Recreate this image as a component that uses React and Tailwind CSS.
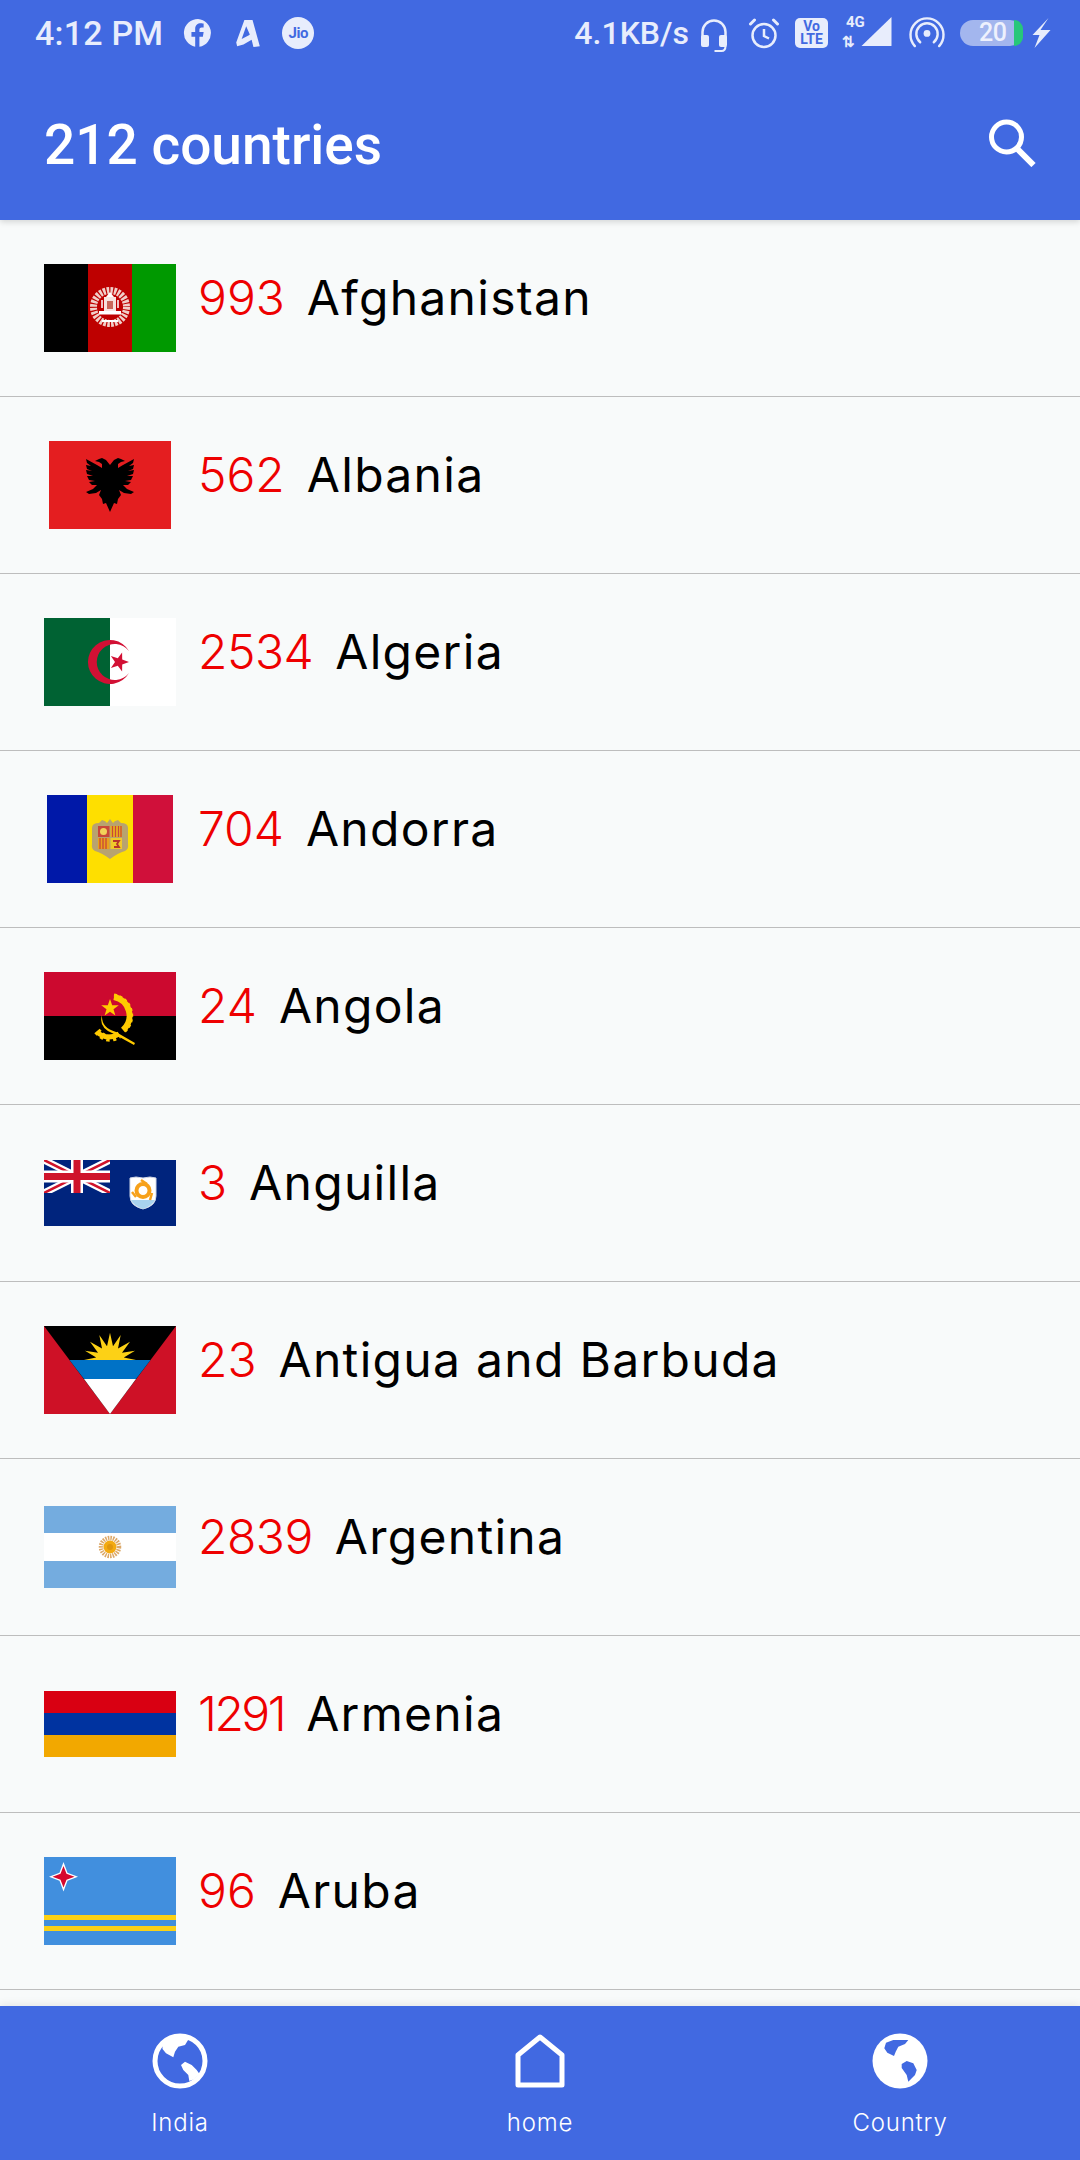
import React from "react";

function Flag({ children, w = 132, h = 88 }) {
  return (
    <svg width={w} height={h} viewBox={`0 0 ${w} ${h}`} className="block">
      {children}
    </svg>
  );
}

const Afghanistan = () => (
  <Flag>
    <rect width="44" height="88" fill="#000" />
    <rect x="44" width="44" height="88" fill="#be0000" />
    <rect x="88" width="44" height="88" fill="#009900" />
    <circle cx="66" cy="43" r="16.500" fill="none" stroke="#f0cfc9" strokeWidth="7" strokeDasharray="2.500 1.200" />
    <rect x="60" y="33" width="12" height="14" fill="#f6e3df" />
    <rect x="63" y="37" width="6" height="8" fill="#c96a5c" />
    <rect x="55" y="47" width="22" height="3.500" fill="#fff" />
    <path d="M58 36v8M74 36v8" stroke="#fff" strokeWidth="1.500" />
    <path d="M62 33l4-5 4 5z" fill="#fff" />
    <path d="M58 57h16" stroke="#fff" strokeWidth="2" />
  </Flag>
);
const eagle =
  "M61 24L57 19L53 17L50 18L46 20L50 21L53 23L53 27L48 24L37 18L38 22L42 25L37 24L38 28L43 30L37 29L38 33L44 35L38 35L40 39L46 40L40 41L43 44L48 44L44 48L37 51L40 53L47 52L52 49L50 54L53 58L54 63L57 62L61 71Z";
const Albania = () => (
  <Flag w={122} h={88}>
    <rect width="122" height="88" fill="#e41e20" />
    <path d={eagle} fill="#000" />
    <path d={eagle} fill="#000" transform="translate(122 0) scale(-1 1)" />
  </Flag>
);
const Algeria = () => (
  <Flag>
    <rect width="66" height="88" fill="#006233" />
    <rect x="66" width="66" height="88" fill="#fff" />
    <path d="M85 33A22 22 0 1 0 85 55A18 18 0 1 1 85 33z" fill="#d21034" />
    <path d="M85 44L78.200 46.400L78.100 53.500L73.800 47.800L66.900 49.900L71 44L66.900 38.100L73.800 40.200L78.100 34.500L78.200 41.600z" fill="#d21034" />
  </Flag>
);
const Andorra = () => (
  <Flag w={126} h={88}>
    <rect width="40" height="88" fill="#0018a8" />
    <rect x="40" width="46" height="88" fill="#fedf00" />
    <rect x="86" width="40" height="88" fill="#d0103a" />
    <path d="M45 33q0-5 7-5l3-3q4 1 5 3l3-4 3 4q1-2 5-3l3 3q7 0 7 5v16q1 5-3 7-7 2-15 8-8-6-15-8-4-2-3-7z" fill="#b8a36f" />
    <rect x="51" y="31" width="11.500" height="11" fill="#c8473a" />
    <circle cx="56.500" cy="36.500" r="3.500" fill="#f2d35a" />
    <rect x="63.500" y="31" width="11.500" height="11" fill="#e9b41c" />
    <path d="M65.500 31v11M68.500 31v11M71.500 31v11M74 31v11" stroke="#c8473a" strokeWidth="1.300" />
    <rect x="51" y="43" width="11.500" height="11" fill="#e9a21c" />
    <path d="M53 43v11M56 43v11M59 43v11" stroke="#c8473a" strokeWidth="1.300" />
    <rect x="63.500" y="43" width="11.500" height="11" fill="#f0c92a" />
    <path d="M66 46h6l-2 3 2 3h-5" fill="none" stroke="#b8352a" strokeWidth="1.800" />
  </Flag>
);
const Angola = () => (
  <Flag>
    <rect width="132" height="44" fill="#cc092f" />
    <rect y="44" width="132" height="44" fill="#000" />
    <path d="M70 25A19 19 0 0 1 79 58" fill="none" stroke="#ffcb00" strokeWidth="6" />
    <path d="M70 23A21 21 0 0 1 80 60" fill="none" stroke="#ffcb00" strokeWidth="3" strokeDasharray="3 2.500" />
    <path d="M53 60Q63 69 75 62" fill="none" stroke="#ffcb00" strokeWidth="5" />
    <path d="M53 59Q63 71 75 63" fill="none" stroke="#ffcb00" strokeWidth="7" strokeDasharray="3 3" />
    <path d="M58 43Q57 56 72 60L91 71L90 73L70 62Q54 56 58 43z" fill="#ffcb00" />
    <path d="M66 27L68.200 33.200L74.800 33.300L69.500 37.300L71.400 43.500L66 39.800L60.600 43.500L62.500 37.300L57.200 33.300L63.800 33.200z" fill="#ffcb00" />
  </Flag>
);
const Anguilla = () => (
  <Flag w={132} h={66}>
    <rect width="132" height="66" fill="#00247d" />
    <svg width="66" height="33" viewBox="0 0 66 33">
      <path d="M0 0L66 33M66 0L0 33" stroke="#fff" strokeWidth="7" />
      <path d="M0 0L66 33M66 0L0 33" stroke="#cf142b" strokeWidth="2.500" />
      <path d="M33 0V33M0 16.500H66" stroke="#fff" strokeWidth="12" />
      <path d="M33 0V33M0 16.500H66" stroke="#cf142b" strokeWidth="7" />
    </svg>
    <path d="M86 18l6-1 7 1 7-1 6 1v18q0 10-13 13q-13-3-13-13z" fill="#fff" stroke="#cfd6e6" strokeWidth="1" />
    <path d="M87 40h24q-3 6-12 9q-9-3-12-9z" fill="#a9d3ee" />
    <circle cx="99" cy="30.500" r="6.500" fill="none" stroke="#f7a11a" strokeWidth="4" />
    <path d="M97 20l6 4M108 33l-2 7M92 37l-4-5" stroke="#f7a11a" strokeWidth="2.500" />
  </Flag>
);
const Antigua = () => (
  <Flag>
    <rect width="132" height="88" fill="#ce1126" />
    <path d="M0 0H132L66 88z" fill="#000" />
    <path d="M25.500 34H106.500L92 53H40z" fill="#0072c6" />
    <path d="M40 53H92L66 88z" fill="#fff" />
    <path
      d="M40 34L52.200 31.600L41 24.700L54 26.800L46 15.700L58 22.500L55.300 9L63 20.300L66 6.700L69 20.300L76.700 9L74 22.500L86 15.700L78 26.800L91 24.700L79.800 31.600L92 34z"
      fill="#fcd116"
    />
  </Flag>
);
const Argentina = () => (
  <Flag w={132} h={82}>
    <rect width="132" height="82" fill="#74acdf" />
    <rect y="27" width="132" height="28" fill="#fff" />
    <circle cx="66" cy="41" r="9" fill="none" stroke="#dca868" strokeWidth="4.500" strokeDasharray="1.500 1" />
    <circle cx="66" cy="41" r="6.500" fill="#f3aa12" />
    <circle cx="66" cy="41" r="3" fill="#e0960e" />
  </Flag>
);
const Armenia = () => (
  <Flag w={132} h={66}>
    <rect width="132" height="22" fill="#d90012" />
    <rect y="22" width="132" height="22" fill="#0033a0" />
    <rect y="44" width="132" height="22" fill="#f2a800" />
  </Flag>
);
const Aruba = () => (
  <Flag>
    <rect width="132" height="88" fill="#418fde" />
    <rect y="58" width="132" height="5" fill="#fbd116" />
    <rect y="69" width="132" height="5" fill="#fbd116" />
    <path d="M19.500 5L23.500 15.700 34 19.700 23.500 23.700 19.500 34.500 15.500 23.700 5 19.700 15.500 15.700z" fill="#fff" />
    <path d="M19.500 9L22.500 16.700 30.500 19.700 22.500 22.700 19.500 30.500 16.500 22.700 8.500 19.700 16.500 16.700z" fill="#d6082e" />
  </Flag>
);

const rows = [
  ["993", "Afghanistan", Afghanistan, ""],
  ["562", "Albania", Albania, ""],
  ["2534", "Algeria", Algeria, "tracking-[-0.5px]"],
  ["704", "Andorra", Andorra, ""],
  ["24", "Angola", Angola, ""],
  ["3", "Anguilla", Anguilla, ""],
  ["23", "Antigua and Barbuda", Antigua, ""],
  ["2839", "Argentina", Argentina, "tracking-[-0.5px]"],
  ["1291", "Armenia", Armenia, "tracking-[-2.5px]"],
  ["96", "Aruba", Aruba, ""],
];

const Fb = () => (
  <svg width="30" height="30" viewBox="0 0 32 32" className="block">
    <path d="M16 1a15 15 0 0 0-3 29.700V20h-4v-5h4v-3.500C13 7.500 15.500 5.500 19 5.500c1.500 0 3 .3 3 .3V10h-2c-2 0-2.500 1.200-2.500 2.500V15H22l-.8 5h-3.700v10.700A15 15 0 0 0 16 1z" fill="#e8edfc" />
  </svg>
);
const ABrand = () => (
  <svg width="26" height="29" viewBox="0 0 28 32" className="block">
    <path d="M10 1h9l8 29-7 1-2-8-9 5-7 2-1-4zM12 8l-5 14 8-4 1-1z" fill="#e8edfc" fillRule="evenodd" />
  </svg>
);
const Jio = () => (
  <div className="w-8 h-8 rounded-full bg-[#e8edfc] flex items-center justify-center text-[#4169e1] text-[15px] font-bold tracking-[-0.5px] font-['Roboto',sans-serif]">
    Jio
  </div>
);
const Headset = () => (
  <svg width="28" height="34" viewBox="0 0 28 34" className="block mt-[5px]">
    <path d="M2.500 19V13a11.500 11.500 0 0 1 23 0v6" fill="none" stroke="#e8edfc" strokeWidth="2.500" />
    <rect x="1" y="16" width="8" height="12" rx="2" fill="#e8edfc" />
    <rect x="19" y="16" width="8" height="12" rx="2" fill="#e8edfc" />
    <path d="M25.500 27q0 5-4 5h-7" fill="none" stroke="#e8edfc" strokeWidth="2" />
  </svg>
);
const Alarm = () => (
  <svg width="32" height="31" viewBox="0 0 32 31" className="block">
    <circle cx="16" cy="17.500" r="11.500" fill="none" stroke="#e8edfc" strokeWidth="2.500" />
    <path d="M16 11v7l5 2.500" fill="none" stroke="#e8edfc" strokeWidth="2.500" />
    <path d="M2.500 6l4-4M29.500 6l-4-4" stroke="#e8edfc" strokeWidth="3" strokeLinecap="round" />
  </svg>
);
const Signal = () => (
  <svg width="31" height="30" viewBox="0 0 31 30" className="block">
    <path d="M30.500 1v28.500a.5.5 0 0 1-.5.5H.5z" fill="#e8edfc" />
  </svg>
);
const Hotspot = () => (
  <svg width="36" height="33" viewBox="0 0 36 34" className="block">
    <circle cx="18" cy="18" r="3.500" fill="#e8edfc" />
    <path d="M11 27a11 11 0 1 1 14 0" fill="none" stroke="#e8edfc" strokeWidth="2.500" strokeLinecap="round" />
    <path d="M5.500 31a17 17 0 1 1 25 0" fill="none" stroke="#e8edfc" strokeWidth="2.500" strokeLinecap="round" />
  </svg>
);
const Bolt = () => (
  <svg width="19" height="30" viewBox="0 0 18 30" className="block">
    <path d="M16 0L8 12h10L2 30l5-13H0z" fill="#e8edfc" />
  </svg>
);

function Globe({ full }) {
  if (full) {
    return (
      <svg width="56" height="56" viewBox="0 0 56 56" className="block">
        <circle cx="28" cy="28" r="27.500" fill="#fff" />
        <path d="M14 9.700L21.300 7L36.300 7L33 11L26.300 13.700L23.700 18.700L22 23L15.300 19.700L12.300 15.300z" fill="#4169e1" />
        <path d="M29.700 31L34.700 28L41.300 30.300L44.700 37L43 42L36.300 48.700L34.700 42L29.700 35z" fill="#4169e1" />
      </svg>
    );
  }
  return (
    <svg width="56" height="56" viewBox="0 0 56 56" className="block">
      <circle cx="28" cy="28" r="25" fill="none" stroke="#fff" strokeWidth="5" />
      <path d="M37.300 5L33 12L26.300 13.700L23 18.700L21.300 24.300L14 20.300L10.500 16L10.500 11Q20 1 37.300 5Z" fill="#fff" />
      <path d="M29 32L33 28.700L39.700 32L44.700 37L47.500 41L42.300 46.300L37.300 48L36.300 42L31.300 37Z" fill="#fff" />
    </svg>
  );
}

function NavItem({ icon, label }) {
  return (
    <div className="flex-1 flex flex-col items-center pt-[27px]">
      <div className="h-[56px] flex items-center justify-center">{icon}</div>
      <div className="mt-[18px] text-[24px] leading-[32px] tracking-[0.8px] text-white font-light font-['Inter',sans-serif]">
        {label}
      </div>
    </div>
  );
}

export default function App() {
  return (
    <div className="relative w-[1080px] h-[2160px] overflow-hidden flex flex-col bg-[#f8fafa]">
      <header className="h-[220px] shrink-0 bg-[#4169e1] shadow-[0_2px_6px_rgba(0,0,0,0.15)] relative z-10 flex flex-col">
        <div className="h-[66px] flex items-center justify-between pl-[35px] pr-[29px] text-[#e8edfc] font-['Roboto',sans-serif] font-medium">
          <div className="flex items-center">
            <span className="text-[34px] leading-none tracking-[0.2px]">4:12 PM</span>
            <span className="ml-[20px]"><Fb /></span>
            <span className="ml-[22px]"><ABrand /></span>
            <span className="ml-[21px]"><Jio /></span>
          </div>
          <div className="flex items-center">
            <span className="text-[32px] leading-none">4.1KB/s</span>
            <span className="ml-[11px]"><Headset /></span>
            <span className="ml-[20px]"><Alarm /></span>
            <span className="ml-[15px] w-[33px] h-[30px] rounded-[5px] bg-[#e8edfc] text-[#4169e1] text-[14px] leading-[13px] font-bold text-center flex flex-col justify-center">
              <span>Vo</span>
              <span>LTE</span>
            </span>
            <span className="ml-[14px] w-[19px] h-[32px] relative text-[15px] leading-[14px] font-bold">
              <span className="absolute left-[4px] top-[-2px]">4G</span>
              <span className="absolute left-0 top-[18px] text-[15px]">⇅</span>
            </span>
            <span className="-mt-[4px]"><Signal /></span>
            <span className="ml-[17px] -mt-[2px]"><Hotspot /></span>
            <span className="ml-[15px] w-[63px] h-[26px] rounded-full bg-[#a3b6ee] relative flex items-center">
              <span className="ml-[19px] text-[25px] leading-[26px] text-[#eef1fd] tracking-[-0.5px]">20</span>
              <span className="absolute right-0 top-0 bottom-0 w-[9px] rounded-r-full bg-[#27c77a]" />
            </span>
            <span className="ml-[9px]"><Bolt /></span>
          </div>
        </div>
        <div className="flex-1 flex items-center justify-between pl-[44px] pr-[44px]">
          <h1 className="text-[55px] leading-none font-medium text-white font-['Roboto',sans-serif] mt-[4px]">212 countries</h1>
          <svg width="47" height="48" viewBox="0 0 46 48" className="block">
            <circle cx="17" cy="18" r="15" fill="none" stroke="#fff" strokeWidth="5" />
            <path d="M28 30l16 16" stroke="#fff" strokeWidth="6" />
          </svg>
        </div>
      </header>

      <main className="flex-1 overflow-hidden">
        {rows.map(([n, name, F, numCls]) => (
          <div key={name} className="h-[177px] border-b border-[#bdbdbd] box-border flex items-start pl-[44px] pt-[44px]">
            <div className="w-[132px] h-[88px] shrink-0 flex items-center justify-center">
              <F />
            </div>
            <div className="ml-[22px] -mt-[1px] text-[48px] leading-[70px] font-['Inter',sans-serif] whitespace-nowrap">
              <span className={`text-[#ee0000] font-light mr-[22px] ${numCls}`}>{n}</span>
              <span className="text-black tracking-[1.3px]">{name}</span>
            </div>
          </div>
        ))}
      </main>

      <nav className="absolute left-0 right-0 bottom-0 h-[154px] bg-[#4169e1] flex shadow-[0_-2px_8px_rgba(0,0,0,0.08)]">
        <NavItem label="India" icon={<Globe />} />
        <NavItem
          label="home"
          icon={
            <svg width="50" height="54" viewBox="0 0 50 54" className="block">
              <path d="M3 51V21L25 3l22 18v30z" fill="none" stroke="#fff" strokeWidth="5" strokeLinejoin="round" />
            </svg>
          }
        />
        <NavItem label="Country" icon={<Globe full />} />
      </nav>
    </div>
  );
}
